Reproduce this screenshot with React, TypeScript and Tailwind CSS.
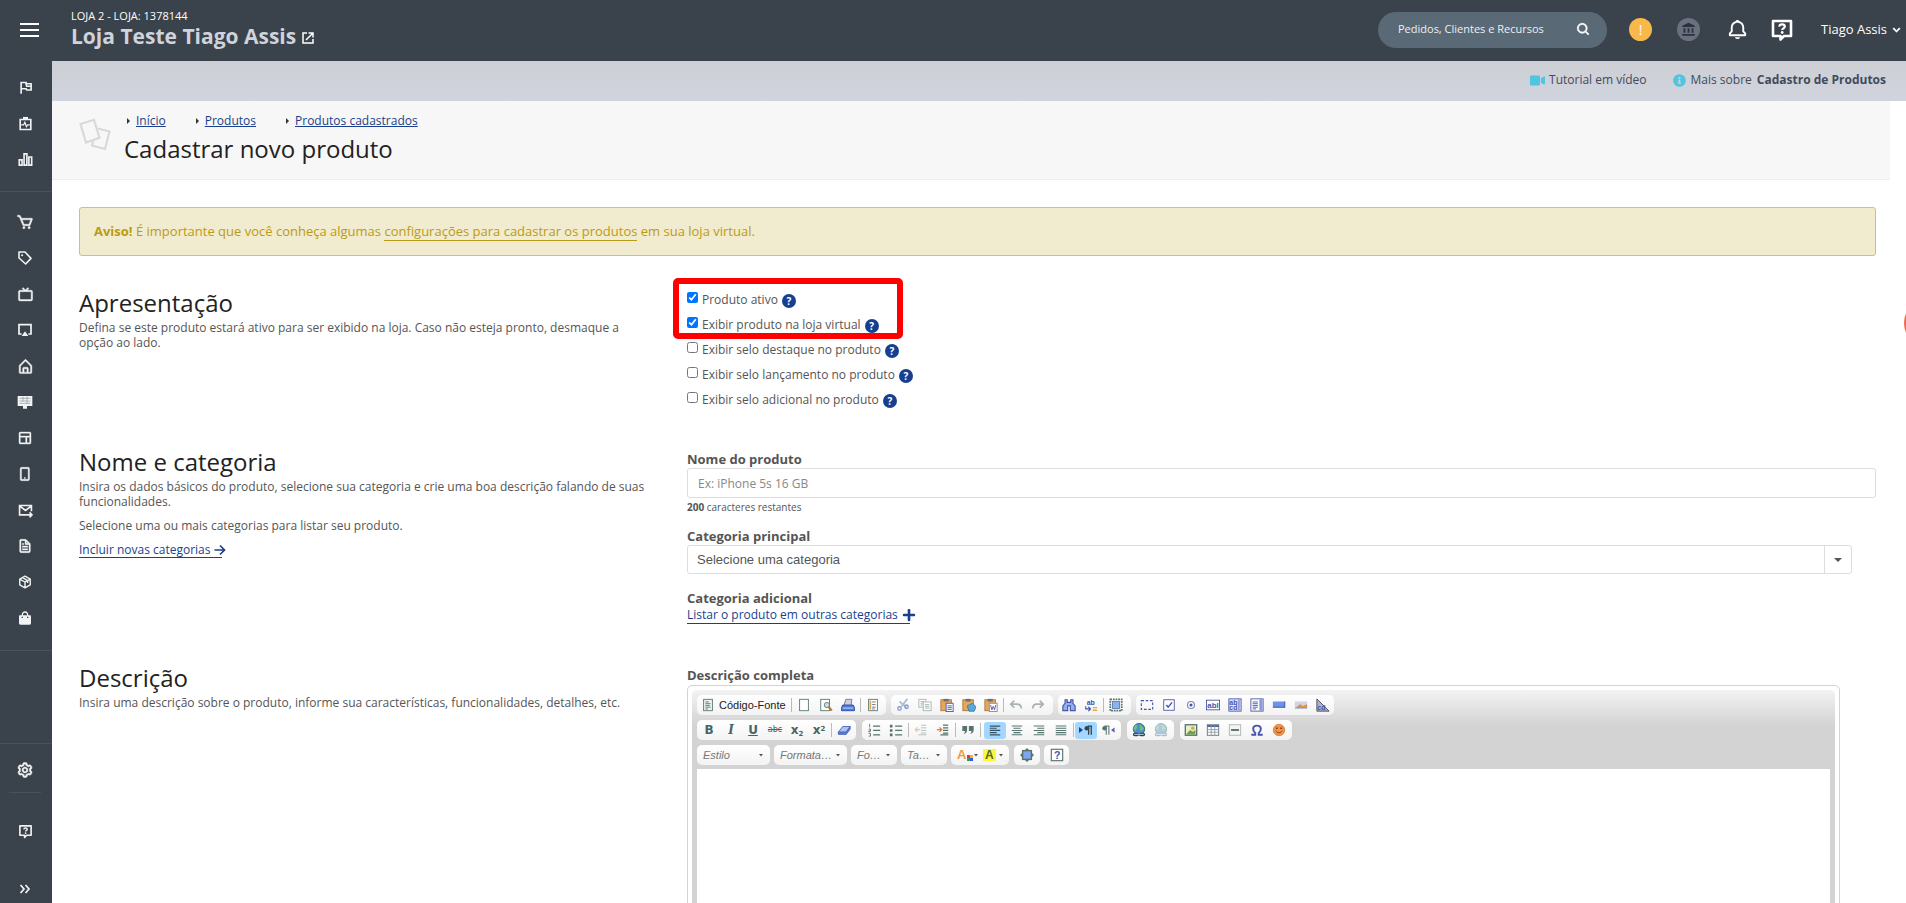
import React from "react";
import { MdAccountBalance } from "react-icons/md";
import { BiCart, BiTv, BiHomeAlt, BiLayout, BiMobileAlt, BiFile, BiCog, BiSolidShoppingBag, BiBell, BiChevronDown, BiSearch } from "react-icons/bi";
import { FaVideo, FaInfoCircle, FaPlus } from "react-icons/fa";

const sans = "font-['Open_Sans',sans-serif]";

function Svg({ children, size = 16, vb = 24, className = "" }: { children: React.ReactNode; size?: number; vb?: number; className?: string }) {
  return (
    <svg width={size} height={size} viewBox={`0 0 ${vb} ${vb}`} fill="none" className={className} aria-hidden="true">
      {children}
    </svg>
  );
}

function ChatHelp({ size }: { size: number }) {
  return (
    <Svg size={size}>
      <path d="M3 3h18v15h-7l-3.500 3.500V18H3z" stroke="currentColor" strokeWidth="2.600" strokeLinejoin="round" />
      <path d="M9.200 8.600c.2-1.600 1.400-2.200 2.800-2.200s2.800.7 2.800 2.200c0 1.700-2.600 1.700-2.600 3.400" stroke="currentColor" strokeWidth="2.200" />
      <circle cx="12.200" cy="14.500" r="1.400" fill="currentColor" />
    </Svg>
  );
}

const stroke = { stroke: "currentColor", strokeWidth: 2 } as const;
const bold = { stroke: "currentColor", strokeWidth: 2.6 } as const;

const navTop = [
  { label: "Início", icon: <Svg size={15}><path d="M5 22V4h8l1 2h7v10h-7l-1-2H5M13 4v3l1 3h7" {...bold} /></Svg> },
  {
    label: "Painel",
    icon: <Svg size={15}><path d="M3.500 5.500h17v16h-17z" {...bold} /><path d="M8 1.500h8v4H8z" fill="currentColor" /><path d="M5 14h4l2-4 2.500 7 2-3h3.500" {...stroke} /></Svg>,
  },
  { label: "Relatórios", icon: <Svg size={15}><path d="M2 12.500h4.500v8.500H2zM9.700 3h4.500v18H9.700zM17.400 8h4.500v13h-4.500z" {...bold} /></Svg> },
];

const navMain = [
  { label: "Pedidos", icon: <BiCart size={18} strokeWidth={0.6} stroke="currentColor" /> },
  { label: "Produtos", icon: <Svg size={16}><path d="M3 3h9l9 9.500L13 21 3 12z" {...stroke} strokeWidth={2.4} strokeLinejoin="round" /><circle cx="7.700" cy="7.700" r="1.500" fill="currentColor" /></Svg> },
  { label: "Canais", icon: <BiTv size={17} strokeWidth={0.6} stroke="currentColor" /> },
  { label: "Transmissão", icon: <Svg size={16}><path d="M7 18H3V4h18v14h-4" {...bold} /><path d="M12 14l5 7H7z" fill="currentColor" /></Svg> },
  { label: "Casa", icon: <BiHomeAlt size={17} strokeWidth={0.6} stroke="currentColor" /> },
  {
    label: "Monitor",
    icon: <Svg size={16}><path fill="currentColor" d="M1 3h22v15h-8v4H9v-4H1z" /><path d="M4 6.500h16M4 10.500h16M4 14h16M9 4v7M15 4v11" stroke="#9aa1a8" strokeWidth="1.200" /></Svg>,
  },
  { label: "Layout", icon: <BiLayout size={16} strokeWidth={0.6} stroke="currentColor" /> },
  { label: "Celular", icon: <BiMobileAlt size={16} strokeWidth={0.6} stroke="currentColor" /> },
  { label: "E-mail", icon: <Svg size={15}><path d="M13 19H2.500V4h19v9M3 5l9 7 9-7" {...bold} /><path d="M13 19h9M18.500 15l4 4-4 4" {...bold} /></Svg> },
  { label: "Arquivos", icon: <BiFile size={16} strokeWidth={0.6} stroke="currentColor" /> },
  { label: "Pacotes", icon: <Svg size={14}><path d="M12 2l9 5v10l-9 5-9-5V7zM3.500 7.500L12 12l8.500-4.500M12 12v10M8 4.500l8.500 5v4" {...stroke} strokeWidth={2.4} strokeLinejoin="round" /></Svg> },
  { label: "Sacola", icon: <BiSolidShoppingBag size={16} /> },
];

function NavButton({ label, children, className = "h-9" }: { label: string; children: React.ReactNode; className?: string }) {
  return (
    <button type="button" aria-label={label} className={`flex w-full shrink-0 items-center justify-center text-[#f1f2f3] ${className}`}>
      {children}
    </button>
  );
}

function Sidebar() {
  return (
    <nav className="flex w-13 shrink-0 flex-col bg-[#3a424b]">
      <div className="flex h-[131px] flex-col border-b border-[#46525e] pt-2 pr-0.5">
        {navTop.map((n) => <NavButton key={n.label} label={n.label}>{n.icon}</NavButton>)}
      </div>
      <div className="flex flex-col border-b border-[#46525e] pt-3 pr-0.5 pb-[14px]">
        {navMain.map((n) => <NavButton key={n.label} label={n.label}>{n.icon}</NavButton>)}
      </div>
      <div className="flex-1 border-b border-[#46525e]" />
      <div className="flex h-[159px] flex-col items-center pr-0.5">
        <NavButton label="Configurações" className="h-12 pt-1"><BiCog size={18} strokeWidth={0.6} stroke="currentColor" /></NavButton>
        <div className="h-px w-8 shrink-0 bg-[#46525e]" />
        <NavButton label="Ajuda" className="mt-5 h-9"><ChatHelp size={15} /></NavButton>
        <NavButton label="Expandir menu" className="mt-[26px] h-7">
          <Svg size={12}><path d="M3 4l7 8-7 8M13 4l7 8-7 8" {...stroke} strokeWidth={3.4} /></Svg>
        </NavButton>
      </div>
    </nav>
  );
}

function Header() {
  return (
    <header className="flex h-[61px] shrink-0 items-center bg-[#3a424b] pr-0.5 pb-0.5 text-white">
      <button type="button" aria-label="Menu" className="ml-5 flex h-[14px] w-[19px] flex-col justify-between">
        <span className="h-0.5 w-full bg-white" />
        <span className="h-0.5 w-full bg-white" />
        <span className="h-0.5 w-full bg-white" />
      </button>
      <div className="ml-8 flex flex-col">
        <span className="text-[11px] leading-3">LOJA 2 - LOJA: 1378144</span>
        <a href="#loja" className="flex items-center gap-1.5 text-[21px] leading-7 font-bold text-[#ced3dc]">
          Loja Teste Tiago Assis
          <Svg size={12} className="mt-1 text-white"><path d="M10 2H2v20h20v-8M13 2h9v9M22 2L8 16" {...stroke} strokeWidth={3} /></Svg>
        </a>
      </div>
      <div className="ml-auto flex h-9 w-[229px] items-center rounded-full bg-[#5a6976] pr-4 pl-5">
        <input aria-label="Pesquisar" placeholder="Pedidos, Clientes e Recursos" className="min-w-0 flex-1 bg-transparent text-[11px] text-white outline-none placeholder:text-[#eef1f3]" />
        <button type="button" aria-label="Buscar"><BiSearch size={15} strokeWidth={1} stroke="currentColor" /></button>
      </div>
      <button type="button" aria-label="Alertas" className="ml-[22px] size-[23px] rounded-full bg-[#f9b84a] text-[14px] leading-none">!</button>
      <button type="button" aria-label="Banco" className="ml-[25px] flex size-[23px] items-center justify-center rounded-full bg-[#6a7080] text-[#2b323c]"><MdAccountBalance size={15} /></button>
      <button type="button" aria-label="Notificações" className="ml-[26px]"><BiBell size={23} /></button>
      <button type="button" aria-label="Ajuda" className="ml-[21px]"><ChatHelp size={24} /></button>
      <button type="button" className="ml-[27px] flex items-center gap-0.5 text-[13px] font-medium">Tiago Assis <BiChevronDown size={15} strokeWidth={1} stroke="currentColor" /></button>
    </header>
  );
}

function Crumb({ children }: { children: string }) {
  return (
    <li className="flex items-center gap-[6px]">
      <svg width="3" height="6" viewBox="0 0 3 6" aria-hidden="true"><path d="M0 0l3 3-3 3z" fill="#333" /></svg>
      <a href="#" className="text-[#1b3f8b] underline">{children}</a>
    </li>
  );
}

function Check({ label, checked = false }: { label: string; checked?: boolean }) {
  return (
    <div className="flex h-[25px] items-center gap-1">
      <label className="flex items-center gap-1 text-[12px] text-[#555]">
        <input type="checkbox" defaultChecked={checked} className="mb-1 size-[11px] accent-[#0075ff]" />
        {label}
      </label>
      <button type="button" aria-label="Ajuda" className="mt-0.5 flex size-[14px] items-center justify-center rounded-full bg-[#16408f] text-[10px] leading-none font-bold text-white">?</button>
    </div>
  );
}

function Section({ title, texts, children, className }: { title: string; texts: React.ReactNode; children: React.ReactNode; className: string }) {
  return (
    <section className={`grid grid-cols-[608fr_1189fr] ${className}`}>
      <div className="pr-8">
        <h2 className="mb-px text-[24px] leading-8 text-[#222]">{title}</h2>
        <div className="flex flex-col items-start gap-[9px] text-[12px] leading-[15px] text-[#555]">{texts}</div>
      </div>
      <div className="min-w-0">{children}</div>
    </section>
  );
}

/* ---------- editor toolbar ---------- */

const g = "#56736f";
const b = "#4653a8";

const icons: Record<string, React.ReactNode> = {
  source: <><rect x="3" y="1.500" width="10" height="13" fill="#eef3f3" stroke={g} /><path d="M5 4.500h4M5 6.500h6M5 8.500h5M5 10.500h6M5 12.500h3" stroke={g} /></>,
  page: <rect x="3" y="1.500" width="10" height="13" fill="#fff" stroke={g} />,
  preview: <><rect x="2" y="1.500" width="10" height="13" fill="#fff" stroke={g} /><circle cx="9" cy="8" r="3" fill="#cdd" stroke="#677" /><path d="M11 10l3.500 4.500" stroke="#b57a3a" strokeWidth="2.500" /></>,
  print: <><path d="M3.500 8l2-6.500h7L11.500 8" fill="#cbd2dc" stroke="#6a7791" /><path d="M2 8h12l1.500 3v3.500H.5V11z" fill="#4a7be0" stroke="#2c4da0" /><path d="M2 11.500h12" stroke="#dce6ff" /></>,
  template: <><rect x="3" y="1.500" width="10" height="13" fill="#fff" stroke={g} /><path d="M5 3v10" stroke="#dfa556" strokeWidth="2" /><path d="M7 4.500h4M7 7.500h4M7 10.500h4M7 12.500h3" stroke={g} /></>,
  cut: <><path d="M13 1L6 10M4 4l8 7" stroke="#aebfd4" strokeWidth="2" /><circle cx="4" cy="12" r="2" stroke="#8b9bd8" strokeWidth="1.500" /><circle cx="12" cy="10" r="2" stroke="#8b9bd8" strokeWidth="1.500" /></>,
  copy: <g opacity=".5"><rect x="1" y="1.500" width="8" height="9" fill="#fff" stroke={g} /><path d="M3 4h4M3 6h3M3 8h3" stroke={g} /><rect x="6" y="4.500" width="9" height="10" fill="#fff" stroke={g} /><path d="M8 7.500h5M8 9.500h5M8 11.500h5" stroke={g} /></g>,
  paste: <><rect x="1" y="2" width="12" height="12.500" fill="#e6a75a" stroke="#a8743a" /><path d="M4 1h6v3H4z" fill="#6c6f78" /><rect x="7" y="6" width="8" height="9.500" fill="#fff" stroke={b} /><path d="M8.500 9h5M8.500 11h5M8.500 13h5" stroke={b} /></>,
  pasteText: <><rect x="1" y="2" width="12" height="12.500" fill="#e6a75a" stroke="#a8743a" /><path d="M4 1h6v3H4z" fill="#6c6f78" /><path d="M6 9l6-3 4 4-2 5H8z" fill="#59a9d8" stroke="#347aa8" /></>,
  pasteWord: <><rect x="1" y="2" width="12" height="12.500" fill="#e6a75a" stroke="#a8743a" /><path d="M4 1h6v3H4z" fill="#6c6f78" /><rect x="6" y="6" width="9" height="9.500" fill="#fff" stroke="#889" /><path d="M7.500 8l1.500 5.500 1.500-4 1.500 4L13.500 8" stroke={b} /></>,
  undo: <path d="M6 3L2 7l4 4M2.500 7H9c3 0 5 2 5 5" stroke="#a9b3b3" strokeWidth="2" />,
  redo: <path d="M10 3l4 4-4 4M13.500 7H7c-3 0-5 2-5 5" stroke="#a9b3b3" strokeWidth="2" />,
  find: <path d="M3.500 2h2.500v3h4V2h2.500v4l2.500 3v5.500H9.500V9h-3v5.500H1V9l2.500-3z" fill="#8fb0ee" stroke={b} strokeWidth="1.300" />,
  replace: <><text x="3" y="8" fontSize="8" fontWeight="700" fill={b} fontFamily="Liberation Sans">ab</text><path d="M2 9.500v3h5M5 10l2.500 2.500L5 15" stroke={b} strokeWidth="1.300" /><path d="M10 11h5M10 14h5" stroke="#e9a246" strokeWidth="1.500" /></>,
  select: <><rect x="1.500" y="1.500" width="13" height="13" stroke={g} strokeDasharray="2 1" strokeWidth="2" /><rect x="4" y="4" width="8" height="8" fill="#8db4e6" stroke="#5d7fb0" /></>,
  form: <rect x="1.500" y="3" width="13" height="10" stroke={b} strokeDasharray="3 2" strokeWidth="1.300" />,
  checkbox: <><rect x="2" y="2" width="12" height="12" fill="#fff" stroke={b} /><path d="M5 8l2 2.500 4.500-5.500" stroke={b} strokeWidth="1.600" /></>,
  radio: <><circle cx="8" cy="8" r="4" fill="#fff" stroke="#7c89b5" strokeWidth="1.300" /><circle cx="8" cy="8" r="1.800" fill={b} /></>,
  textfield: <><rect x=".5" y="2.500" width="15" height="11" fill="#fff" stroke={b} /><text x="1.500" y="11.500" fontSize="9" fontWeight="700" fill={b} fontFamily="Liberation Sans">abl</text></>,
  textarea: <><rect x="1" y="1" width="14" height="14" fill="#dfe7fa" stroke={b} /><text x="1.500" y="8" fontSize="8" fontWeight="700" fill={b} fontFamily="Liberation Sans">ab</text><text x="1.500" y="14" fontSize="8" fontWeight="700" fill={b} fontFamily="Liberation Sans">cd</text><path d="M12.500 2v12" stroke={b} /></>,
  list: <><rect x="1" y="1" width="14" height="14" fill="#fff" stroke={b} /><path d="M3 4.500h6M3 6.500h6M3 8.500h6M3 10.500h6M3 12.500h4" stroke={b} /><path d="M12.500 1.500v13" stroke="#8a97d8" strokeWidth="3.500" /></>,
  button: <><rect x="1" y="4" width="14" height="7" fill="#6d93e8" /><path d="M1 10.500h14M14.500 4v7" stroke="#3b57b0" /></>,
  imgbutton: <><rect x="1" y="4" width="14" height="7" fill="#cfd6e2" /><path d="M2 11l5-4 3 2 5-2v4z" fill="#d9904a" /><path d="M1 11.500h14" stroke="#7a86a8" /></>,
  hidden: <><path d="M1 1v14h14z" fill="#a9b3cb" stroke="#445" /><text x="1.500" y="14" fontSize="8" fontWeight="700" fill={b} fontFamily="Liberation Sans">cd</text></>,
  eraser: <><path d="M1.500 10.500l5-6.500h8.500l-4.500 6.500z" fill="#a9c2f8" stroke="#4a62b8" /><path d="M1.500 10.500V13h9l4.500-6V4l-4.500 6.500z" fill="#5b80dd" stroke="#4a62b8" /></>,
  ol: <><path d="M7 3.500h8M7 8.500h8M7 13.500h8" stroke={g} strokeWidth="1.300" /><path d="M3 1v4M2 7h2v2H2v1h2M2 12h2v3H2" stroke={g} /></>,
  ul: <><path d="M7 3.500h8M7 8.500h8M7 13.500h8" stroke={g} strokeWidth="1.300" /><path d="M1 2h3v3H1zM1 7h3v3H1zM1 12h3v3H1z" fill={g} /></>,
  outdent: <g opacity=".45"><path d="M8 2.500h6M8 5.500h6M8 8.500h6M8 11.500h6M5 13.500h9" stroke={g} /><path d="M7 7.500H2M4 5L1.500 7.500 4 10" stroke="#d98836" strokeWidth="1.400" /></g>,
  indent: <><path d="M8 2.500h6M8 5.500h6M8 8.500h6M8 11.500h6M5 13.500h9" stroke={g} strokeWidth="1.400" /><path d="M1 7.500h5M4 5l2.500 2.500L4 10" stroke="#e0812c" strokeWidth="1.500" /></>,
  quote: <path d="M1.500 3.500H7v4.500c0 2-1 4-4.500 4.500 1.500-1 2-2 2-3.500h-3zM9 3.500h5.500v4.500c0 2-1 4-4.500 4.500 1.500-1 2-2 2-3.500H9z" fill={g} />,
  left: <path d="M2 3.500h12M2 6h8M2 8.500h12M2 11h8M2 13.500h12" stroke="#35566a" strokeWidth="1.400" />,
  center: <path d="M2 3.500h12M4 6h8M2 8.500h12M4 11h8M2 13.500h12" stroke={g} strokeWidth="1.200" />,
  right: <path d="M2 3.500h12M6 6h8M2 8.500h12M6 11h8M2 13.500h12" stroke={g} strokeWidth="1.200" />,
  justify: <path d="M2 3.500h12M2 6h12M2 8.500h12M2 11h12M2 13.500h12" stroke={g} strokeWidth="1.200" />,
  ltr: <><path d="M0 4.500l4.500 3.500L0 11.500z" fill="#223a9a" /><path d="M15 3.500h-5M11 3v10.500M14 3v10.500" stroke="#345" strokeWidth="1.500" /><circle cx="9" cy="6" r="2.700" fill="#345" /></>,
  rtl: <><path d="M15.500 5l-4 3 4 3z" fill="#6a55b5" /><path d="M9 3.500H4M6 3v10.500M9 3v10.500" stroke={g} strokeWidth="1.200" /><circle cx="4" cy="6" r="2.500" fill={g} /></>,
  link: <><circle cx="8" cy="7" r="6.500" fill="#4f8fd0" stroke="#2d6b56" /><path d="M4 2c3 0 2 4 0 7L1.500 6zM9 1.500l5 5-4 3-1-3z" fill="#6fc07a" /><path d="M3 13h3M10 13h3" stroke="#345" strokeWidth="4" strokeLinecap="round" /><path d="M2.500 13h11" stroke="#cde" /></>,
  unlink: <g opacity=".45"><circle cx="8" cy="7" r="6.500" fill="#4f8fd0" stroke="#2d6b56" /><path d="M4 2c3 0 2 4 0 7L1.500 6zM9 1.500l5 5-4 3-1-3z" fill="#6fc07a" /><path d="M3 13h3M10 13h3" stroke="#578" strokeWidth="4" strokeLinecap="round" /><path d="M2.500 13h11" stroke="#def" /></g>,
  image: <><rect x="1.500" y="2" width="13" height="12" fill="#e6f0c8" stroke={g} strokeWidth="1.500" /><path d="M3 12l4-4 3 2 3-2v5H3z" fill="#6f9f4d" /><circle cx="10" cy="6" r="2" fill="#e8a33f" /></>,
  table: <><rect x="1.500" y="2" width="13" height="12" fill="#fff" stroke={g} /><path d="M1.500 3.500h13" stroke={b} strokeWidth="2" /><path d="M2 7.500h12M2 10.500h12M6 3v11M10 3v11" stroke="#8a9a9a" /></>,
  rule: <><rect x="1.500" y="2" width="13" height="12" fill="#f4f4f4" stroke="#a8b0b0" /><path d="M3.500 8h9" stroke={g} strokeWidth="2.200" /></>,
  omega: <path d="M1.500 13.500h4.500v-2C3 9 2 3 8 3s5 6 2 8.500v2h4.500" stroke={b} strokeWidth="2.200" />,
  smile: <><circle cx="8" cy="8" r="6.500" fill="#f1934c" stroke="#d9803a" /><path d="M4.500 6h2M9.500 6h2" stroke="#7b3d16" strokeWidth="1.500" /><path d="M4.500 9c1.500 3 5.500 3 7 0" stroke="#7b3d16" /></>,
  maximize: <><rect x="3" y="3" width="10" height="10" fill="#7fa8ec" stroke={g} strokeWidth="1.600" /><path d="M8 0l3 3H5zM8 16l3-3H5zM0 8l3-3v6zM16 8l-3-3v6z" fill={g} /></>,
  about: <><rect x="1.500" y="1.500" width="13" height="13" fill="#fff" stroke={g} strokeWidth="1.300" /><text x="4.500" y="12.500" fontSize="12" fontWeight="700" fill={b} fontFamily="Liberation Sans">?</text></>,
};

function Tool({ name, on = false }: { name: string; on?: boolean }) {
  return (
    <button type="button" aria-label={name} className={`flex h-[17px] w-[22px] shrink-0 items-center justify-center rounded-[3px] ${on ? "bg-[#a3d7ff]" : ""}`}>
      <svg width="14" height="14" viewBox="0 0 16 16" fill="none" aria-hidden="true">{icons[name]}</svg>
    </button>
  );
}

function TextTool({ label, children, className = "text-[12px]" }: { label: string; children: React.ReactNode; className?: string }) {
  return <button type="button" aria-label={label} className={`flex h-[18px] w-[22px] shrink-0 items-center justify-center leading-none text-[#476663] ${className}`}>{children}</button>;
}

const Sep = () => <span className="mx-px h-[14px] w-px shrink-0 bg-[#bbb]" />;

function Group({ children, className = "" }: { children: React.ReactNode; className?: string }) {
  return <div className={`flex h-5 items-center rounded-[5px] bg-linear-to-b from-white to-[#f3f3f3] ${className}`}>{children}</div>;
}

const Arrow = () => <svg width="4" height="3" viewBox="0 0 4 3" aria-hidden="true"><path d="M0 0h4L2 2.500z" fill="#555" /></svg>;

function Combo({ label, className }: { label: string; className: string }) {
  return (
    <button type="button" className={`flex h-5 items-center justify-between rounded-[5px] bg-linear-to-b from-white to-[#f3f3f3] pr-[7px] pl-[6px] text-[11px] text-[#777] italic ${className}`}>
      {label}<Arrow />
    </button>
  );
}

function Editor() {
  return (
    <div className="mt-px mr-9 rounded-[5px] border border-[#d3d3d3] p-1">
      <div className="rounded-t-[5px] bg-[#d3d3d3] bg-linear-to-b from-[#f3f3f3] to-[#d3d3d3] to-[36px] px-[5px] pt-[5px] font-['Liberation_Sans',sans-serif]">
        <div className="flex flex-col gap-[5px] pb-1">
          <div className="flex gap-[5px]">
            <Group className="w-[189px]">
              <button type="button" className="flex shrink-0 items-center gap-1 pr-[4px] pl-[4px] text-[11px] text-[#222]">
                <svg width="14" height="14" viewBox="0 0 16 16" fill="none" aria-hidden="true">{icons.source}</svg>Código-Fonte
              </button>
              <Sep /><Tool name="page" /><Tool name="preview" /><Tool name="print" /><Sep /><Tool name="template" />
            </Group>
            <Group className="w-[162px] pl-px">
              {["cut", "copy", "paste", "pasteText", "pasteWord"].map((n) => <Tool key={n} name={n} />)}<Sep /><Tool name="undo" /><Tool name="redo" />
            </Group>
            <Group className="w-[73px]"><Tool name="find" /><Tool name="replace" /><Sep /><Tool name="select" /></Group>
            <Group className="w-[198px]">
              {["form", "checkbox", "radio", "textfield", "textarea", "list", "button", "imgbutton", "hidden"].map((n) => <Tool key={n} name={n} />)}
            </Group>
          </div>
          <div className="flex gap-[6px]">
            <Group className="w-[159px] pl-px font-['DejaVu_Sans',sans-serif]">
              <TextTool label="Negrito" className="text-[12px] font-bold">B</TextTool>
              <TextTool label="Itálico" className="font-['DejaVu_Serif',serif] text-[12px] font-bold italic">I</TextTool>
              <TextTool label="Sublinhado" className="text-[12px] font-bold underline">U</TextTool>
              <TextTool label="Tachado" className="text-[8px] line-through">abc</TextTool>
              <TextTool label="Subscrito" className="text-[12px] font-bold"><span>x<sub className="text-[7px]">2</sub></span></TextTool>
              <TextTool label="Sobrescrito" className="text-[12px] font-bold"><span>x<sup className="text-[7px]">2</sup></span></TextTool>
              <Sep /><Tool name="eraser" />
            </Group>
            <Group className="w-[259px] pl-px">
              <Tool name="ol" /><Tool name="ul" /><Sep /><Tool name="outdent" /><Tool name="indent" /><Sep /><Tool name="quote" /><Sep />
              <div className="ml-0.5 flex items-center"><Tool name="left" on /><Tool name="center" /><Tool name="right" /><Tool name="justify" /><Sep /><Tool name="ltr" on /><Tool name="rtl" /></div>
            </Group>
            <Group className="w-[47px] pl-px"><Tool name="link" /><Tool name="unlink" /></Group>
            <Group className="w-[112px]">{["image", "table", "rule", "omega", "smile"].map((n) => <Tool key={n} name={n} />)}</Group>
          </div>
          <div className="flex gap-1">
            <Combo label="Estilo" className="w-[73px]" />
            <Combo label="Formata…" className="w-[73px]" />
            <Combo label="Fo…" className="w-[46px]" />
            <Combo label="Ta…" className="w-[46px]" />
            <Group className="w-[58px] gap-0.5 pl-[6px]">
              <button type="button" aria-label="Cor do texto" className="flex w-6 items-center gap-px text-[13px] font-bold text-[#ef9a3d]">
                A<svg width="6" height="6" viewBox="0 0 6 6" className="mt-1.5 shrink-0" aria-hidden="true"><path d="M0 0h3v3H0z" fill="#e03a3a" /><path d="M3 0h3v3H3z" fill="#f2b632" /><path d="M0 3h3v3H0z" fill="#3a9a4a" /><path d="M3 3h3v3H3z" fill="#3a55d8" /></svg><Arrow />
              </button>
              <button type="button" aria-label="Cor de fundo" className="flex items-center gap-[3px] text-[12px] leading-none font-bold text-[#4a6a30]">
                <span className="bg-[#fdf63a] px-0.5">A</span><Arrow />
              </button>
            </Group>
            <Group className="ml-px w-[26px] justify-center"><Tool name="maximize" /></Group>
            <Group className="w-[25px] justify-center"><Tool name="about" /></Group>
          </div>
        </div>
        <textarea aria-label="Descrição completa" className="block h-96 w-full resize-none bg-white outline-none" />
      </div>
    </div>
  );
}

const linkCls = "text-[#1b3f8b]";
const labelCls = "block text-[13px] leading-[17px] font-bold";

export default function App() {
  return (
    <div className={`relative flex h-screen flex-col overflow-hidden bg-white text-[#555] ${sans}`}>
      <Header />
      <div className="flex min-h-0 flex-1">
        <Sidebar />
        <main className="min-w-0 flex-1 overflow-y-auto [scrollbar-width:none]">
          <div className="flex h-10 items-center justify-end bg-linear-to-b from-[#cdcfd4] to-[#d0d4de] pr-5 pb-0.5 text-[12px] text-[#414b5c]">
            <a href="#tutorial" className="flex items-center gap-1"><FaVideo size={15} className="text-[#4fc5e0]" />Tutorial em vídeo</a>
            <a href="#ajuda" className="ml-[26px] flex items-center gap-[5px]"><FaInfoCircle size={13} className="text-[#4fc5e0]" />Mais sobre <b>Cadastro de Produtos</b></a>
          </div>
          <div className="mr-4 flex h-[79px] border-b border-[#eee] bg-[#f7f7f7] pl-[27px]">
            <svg width="32" height="33" viewBox="0 0 32 33" fill="none" className="mt-[17px]" aria-hidden="true">
              <path d="M1.500 6L15 1.800l5.500 18L7 24.500z" stroke="#d9d9d9" strokeWidth="2.200" />
              <path d="M19 10.500l11.500 3L26 31l-13-3.500 1.200-5" stroke="#d9d9d9" strokeWidth="2.200" />
            </svg>
            <div className="ml-[13px] pt-3">
              <ol className="flex gap-[30px] pl-[3px] text-[12px] leading-4"><Crumb>Início</Crumb><Crumb>Produtos</Crumb><Crumb>Produtos cadastrados</Crumb></ol>
              <h1 className="mt-1 text-[24px] leading-8 text-[#222]">Cadastrar novo produto</h1>
            </div>
          </div>
          <div className="pr-[30px] pl-[27px]">
            <p className="mt-[27px] flex h-[49px] items-center rounded-[3px] border border-[#d5c260] bg-[#f1ebcf] pl-[14px] text-[13px] text-[#bb9b12]">
              <span><b>Aviso!</b> É importante que você conheça algumas <a href="#config" className="border-b border-[#bb9b12]">configurações para cadastrar os produtos</a> em sua loja virtual.</span>
            </p>
            <Section title="Apresentação" className="mt-[31px] h-[159px]" texts={<p>Defina se este produto estará ativo para ser exibido na loja. Caso não esteja pronto, desmaque a opção ao lado.</p>}>
              <div className="relative">
                <div className="pointer-events-none absolute -top-[9px] -left-[14px] h-[61px] w-[230px] rounded-[5px] border-[6px] border-[#fe0000]" />
                <Check label="Produto ativo" checked />
                <Check label="Exibir produto na loja virtual" checked />
                <Check label="Exibir selo destaque no produto" />
                <Check label="Exibir selo lançamento no produto" />
                <Check label="Exibir selo adicional no produto" />
              </div>
            </Section>
            <Section
              title="Nome e categoria"
              className="h-[216px]"
              texts={<>
                <p>Insira os dados básicos do produto, selecione sua categoria e crie uma boa descrição falando de suas funcionalidades.</p>
                <p>Selecione uma ou mais categorias para listar seu produto.</p>
                <a href="#nova" className={`flex items-center ${linkCls}`}><span className="border-b border-[#1b3f8b] pr-3">Incluir novas categorias</span><Svg size={12} className="-ml-2"><path d="M1 12h20M12 3l9 9-9 9" {...stroke} strokeWidth={3.4} /></Svg></a>
              </>}
            >
              <label htmlFor="nome" className={`mt-[5px] ${labelCls}`}>Nome do produto</label>
              <input id="nome" placeholder="Ex: iPhone 5s 16 GB" className="block h-[30px] w-full rounded-[3px] border border-[#ddd] px-[10px] text-[12px] placeholder:text-[#888]" />
              <p className="mt-px text-[10px] leading-4"><b>200</b> caracteres restantes</p>
              <label htmlFor="cat" className={`mt-[13px] ${labelCls}`}>Categoria principal</label>
              <div className="relative mr-6">
                <select id="cat" className="block h-[29px] w-full appearance-none rounded-[3px] border border-[#ddd] pl-[9px] font-['Liberation_Sans',sans-serif] text-[13px]"><option>Selecione uma categoria</option></select>
                <span className="pointer-events-none absolute inset-y-px right-px flex w-[27px] items-center justify-center border-l border-[#ddd]"><svg width="8" height="4" viewBox="0 0 8 4" aria-hidden="true"><path d="M0 0h8L4 4z" fill="#555" /></svg></span>
              </div>
              <p className={`mt-4 ${labelCls}`}>Categoria adicional</p>
              <a href="#outras" className={`flex w-fit items-center text-[12px] leading-4 ${linkCls}`}><span className="border-b border-[#1b3f8b] pr-3">Listar o produto em outras categorias</span><FaPlus size={14} className="-ml-2 mb-0.5" /></a>
            </Section>
            <Section title="Descrição" className="" texts={<p>Insira uma descrição sobre o produto, informe sua características, funcionalidades, detalhes, etc.</p>}>
              <p className={`mt-[5px] ${labelCls}`}>Descrição completa</p>
              <Editor />
            </Section>
          </div>
        </main>
      </div>
      <span className="absolute top-[299px] -right-[46px] size-12 rounded-full bg-[#f0694a]" />
    </div>
  );
}
